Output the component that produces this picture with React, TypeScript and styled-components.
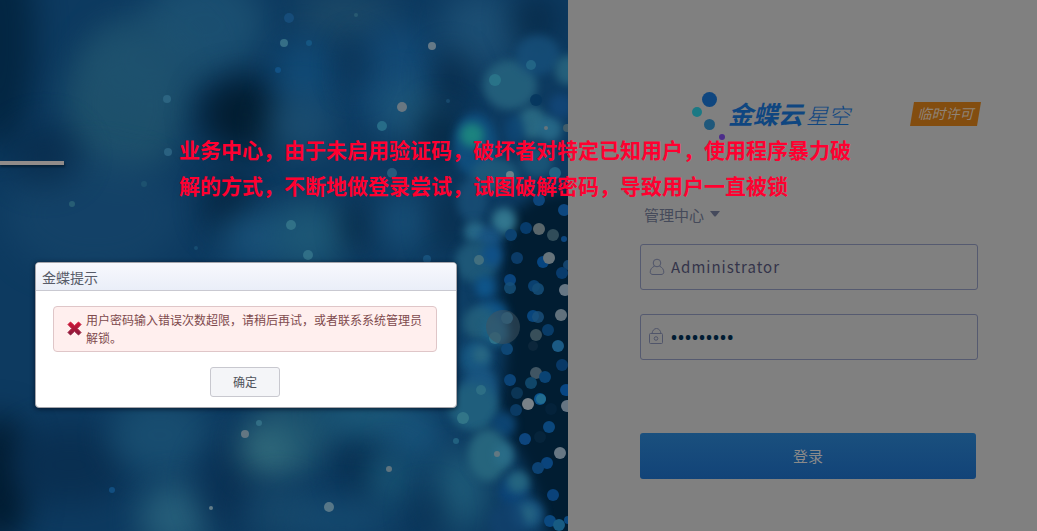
import React from "react";
import styled, { createGlobalStyle } from "styled-components";

const GlobalStyle = createGlobalStyle`
  *, *::before, *::after { box-sizing: border-box; }
  body {
    margin: 0;
    background: #808080;
    font-family: "Noto Sans", "Noto Sans CJK SC", sans-serif;
  }
  button, input, select { font-family: inherit; }
`;

const Page = styled.main`
  position: relative;
  display: grid;
  grid-template-columns: minmax(0, 568fr) minmax(0, 469fr);
  min-height: 100vh;
  overflow: hidden;
`;

const Scene = styled.svg`
  display: block;
  width: 100%;
  height: 100%;
  background: #0a3153;
`;

const LoginPanel = styled.section`
  padding: 92px 56px 52px 72px;
  background: #808080;
`;

const Brand = styled.header`
  display: flex;
  align-items: flex-start;
  padding-left: 52px;
  height: 48px;
`;

const BrandMark = styled.svg`
  flex: none;
  width: 36px;
  height: 48px;
`;

const BrandName = styled.h1`
  margin: 0;
  flex: none;
  display: flex;
  align-items: baseline;
  gap: 3px;
  color: #0f4680;
  font-size: 25px;
  line-height: 44px;
  font-style: italic;
  font-weight: 700;
`;

const BrandSuffix = styled.span`
  font-size: 22px;
  font-weight: 300;
`;

const LicenseBadge = styled.span`
  display: block;
  margin: 10px 0 0 auto;
  flex: none;
  width: 71px;
  height: 24px;
  clip-path: polygon(4px 0, 100% 0, calc(100% - 4px) 100%, 0 100%);
  background: #834d0f;
  color: #8f8377;
  font-size: 14px;
  line-height: 23px;
  font-style: italic;
  text-align: center;
`;

const Form = styled.form`
  display: flex;
  flex-direction: column;
  width: 338px;
  max-width: 100%;
`;

const CenterPicker = styled.div`
  display: flex;
  align-items: center;
  height: 24px;
  margin: 63px 0 17px 4px;
`;

const CenterSelect = styled.select`
  appearance: none;
  border: 0;
  padding: 0;
  width: 66px;
  background: transparent;
  color: #454a5a;
  font-size: 15px;
  line-height: 24px;
`;

const Caret = styled.svg`
  width: 10px;
  height: 6px;
  margin-top: -2px;
  fill: #454a5c;
`;

const Field = styled.label`
  display: flex;
  align-items: center;
  gap: 6px;
  height: 46px;
  margin-bottom: 24px;
  padding: 0 8px;
  border: 1px solid #555a70;
  border-radius: 3px;
`;

const FieldIcon = styled.svg`
  flex: none;
  width: 16px;
  height: 18px;
  fill: none;
  stroke: #50556a;
`;

const FieldInput = styled.input`
  flex: 1;
  min-width: 0;
  border: 0;
  padding: 0;
  outline: 0;
  background: transparent;
  color: #34344a;
  font-family: "Noto Sans CJK SC", sans-serif;
  font-size: 15px;
  line-height: 24px;
  letter-spacing: 1px;

  &[type="password"] {
    color: #001c33;
    font-family: "Noto Sans", sans-serif;
    font-size: 16px;
    font-weight: 700;
  }
`;

const LoginButton = styled.button`
  height: 46px;
  margin: 49px 2px 0 0;
  border: 0;
  border-radius: 3px;
  padding: 0 0 2px;
  background: linear-gradient(#1a507e, #124378);
  color: #8a8a8a;
  font-size: 15px;
`;

const Notice = styled.p`
  position: absolute;
  top: 132px;
  left: 179px;
  margin: 0;
  color: #ff0030;
  font-size: 21px;
  line-height: 36px;
  font-weight: 700;
  white-space: nowrap;
`;

const Dialog = styled.section`
  position: absolute;
  top: 262px;
  left: 35px;
  width: 422px;
  border: 1px solid #a5a5ab;
  border-radius: 4px;
  background: #fff;
  box-shadow: 0 1px 5px rgba(0, 10, 25, 0.7);
`;

const DialogTitle = styled.h2`
  margin: 0;
  padding: 2px 6px 0;
  height: 28px;
  border-bottom: 1px solid #c9c9d1;
  border-radius: 3px 3px 0 0;
  background: linear-gradient(#f7f8fd, #eaeef8);
  color: #575b68;
  font-size: 14px;
  line-height: 26px;
  font-weight: 400;
`;

const DialogBody = styled.div`
  padding: 15px 19px 10px 17px;
  display: flex;
  flex-direction: column;
  align-items: center;
  gap: 15px;
`;

const Alert = styled.div`
  display: flex;
  align-items: center;
  width: 100%;
  gap: 4px;
  padding: 5px 12px 3px 13px;
  border: 1px solid #dfc6c8;
  border-radius: 4px;
  background: #ffefee;
  color: #804a4d;
  font-size: 12px;
  line-height: 18px;
`;

const AlertIcon = styled.svg`
  flex: none;
  width: 15px;
  height: 15px;
  margin-bottom: 4px;
`;

const AlertText = styled.p`
  margin: 0;
  flex: 1;
`;

const ConfirmButton = styled.button`
  width: 70px;
  height: 30px;
  border: 1px solid #c8c8cf;
  border-radius: 3px;
  background: #f4f5f8;
  color: #50535c;
  font-size: 12px;
`;

type Glow = [x: number, y: number, rx: number, ry: number, color: string, opacity: number];
type Dot = [x: number, y: number, r: number, color: string, opacity: number];

const hazes: Glow[] = [
  [0, 40, 35, 110, "#02243f", 0.9],
  [205, 25, 60, 50, "#1e5475", 0.8],
  [125, 105, 60, 75, "#22566e", 0.8],
  [150, 60, 60, 50, "#1e5270", 0.6],
  [95, 215, 90, 60, "#16456a", 0.7],
  [45, 155, 35, 30, "#082a49", 0.7],
  [245, 115, 45, 38, "#021d31", 1],
  [230, 205, 25, 32, "#04233d", 0.9],
  [345, 15, 50, 25, "#1f4c69", 0.8],
  [305, 75, 30, 38, "#124c78", 0.9],
  [300, 125, 35, 30, "#1e5275", 0.8],
  [395, 75, 45, 50, "#144b77", 0.9],
  [410, 110, 32, 28, "#205a7b", 0.8],
  [480, 30, 40, 40, "#1d5075", 0.9],
  [355, 65, 12, 25, "#072a49", 0.8],
  [450, 80, 15, 28, "#06233e", 0.8],
  [440, 135, 18, 30, "#04233b", 0.9],
  [535, 20, 22, 22, "#052541", 0.8],
  [258, 238, 38, 28, "#1a537b", 0.9],
  [310, 235, 38, 35, "#1e5a78", 0.9],
  [358, 226, 12, 20, "#041f36", 0.9],
  [405, 222, 28, 30, "#185078", 0.9],
  [450, 220, 16, 40, "#062844", 0.7],
  [0, 480, 30, 65, "#011b30", 1],
  [70, 465, 60, 40, "#092e50", 0.9],
  [160, 435, 50, 40, "#1b5274", 0.8],
  [175, 517, 36, 34, "#27607b", 0.95],
  [230, 485, 30, 45, "#0a3053", 0.9],
  [272, 448, 32, 28, "#37717f", 0.95],
  [300, 430, 40, 35, "#245e75", 0.6],
  [280, 512, 35, 28, "#184a6c", 0.8],
  [360, 465, 18, 35, "#062b4b", 0.9],
  [370, 415, 52, 20, "#1f607f", 0.9],
  [417, 435, 25, 24, "#1a5880", 0.9],
  [390, 478, 22, 28, "#1b5877", 0.9],
  [340, 520, 50, 20, "#195176", 0.7],
  [460, 490, 25, 40, "#21607d", 0.9],
  [430, 512, 15, 20, "#062a4b", 0.7],
  [450, 330, 18, 70, "#0f456d", 0.7],
];

const glows: Glow[] = [
  [510, 85, 27, 25, "#24607c", 0.95],
  [538, 55, 22, 20, "#17507b", 0.8],
  [568, 70, 13, 15, "#27647e", 0.9],
  [475, 145, 22, 32, "#105080", 0.9],
  [472, 135, 12, 12, "#1c837f", 1],
  [532, 123, 15, 16, "#2a6a83", 0.95],
  [550, 129, 12, 13, "#286b8a", 0.9],
  [561, 106, 12, 12, "#124678", 0.9],
  [495, 175, 24, 17, "#1e5a7a", 0.9],
  [537, 162, 16, 15, "#1b5779", 0.9],
  [515, 130, 10, 15, "#0e4776", 0.8],
  [472, 200, 15, 22, "#195078", 0.8],
  [504, 221, 12, 13, "#32768e", 1],
  [475, 232, 11, 11, "#276887", 1],
  [489, 238, 12, 10, "#1b5787", 0.9],
  [476, 262, 21, 21, "#1d5777", 1],
  [492, 255, 10, 11, "#105087", 1],
  [485, 287, 10, 11, "#0f558a", 1],
  [492, 315, 16, 14, "#10568b", 0.9],
  [480, 323, 17, 17, "#235f7b", 0.9],
  [496, 333, 13, 13, "#1c6489", 0.9],
  [476, 358, 15, 17, "#175781", 1],
  [481, 355, 8, 9, "#2a6882", 1],
  [480, 388, 17, 22, "#195580", 1],
  [473, 407, 25, 24, "#1f5e7c", 1],
  [504, 424, 12, 12, "#0e4776", 0.9],
  [488, 455, 20, 26, "#26657d", 1],
  [504, 455, 10, 12, "#2b6e89", 0.9],
  [513, 492, 14, 15, "#0d4477", 1],
  [518, 482, 11, 11, "#266781", 0.95],
  [527, 514, 17, 15, "#164f7b", 1],
  [528, 514, 8, 9, "#286884", 0.9],
  [507, 523, 18, 20, "#12426f", 0.7],
];

const dots: Dot[] = [
  [289, 18, 5, "#185080", 0.8],
  [284, 43, 4, "#356e86", 1],
  [309, 43, 3, "#155682", 1],
  [356, 15, 2, "#33677a", 0.6],
  [278, 70, 3, "#125184", 1],
  [432, 46, 4, "#657987", 1],
  [167, 99, 4, "#2c6481", 1],
  [168, 152, 4, "#2a6180", 1],
  [72, 204, 3, "#2a6175", 0.9],
  [144, 184, 3, "#235b75", 0.6],
  [196, 248, 2, "#1b5579", 0.7],
  [402, 107, 5, "#697781", 1],
  [382, 126, 5, "#276c88", 1],
  [448, 101, 2, "#1a4e72", 0.8],
  [392, 173, 5, "#326a88", 0.7],
  [495, 80, 6, "#2c788c", 0.8],
  [531, 65, 5, "#256a8a", 0.8],
  [536, 100, 6, "#06365e", 0.9],
  [510, 175, 4, "#6c8189", 1],
  [555, 173, 6, "#266b8b", 0.8],
  [546, 128, 2, "#66747c", 1],
  [567, 128, 4, "#415c68", 1],
  [291, 225, 5, "#347489", 0.9],
  [308, 255, 5, "#33728a", 0.9],
  [427, 259, 4, "#185480", 0.9],
  [479, 260, 5, "#47727f", 0.9],
  [539, 200, 6, "#0d457b", 1],
  [564, 210, 6, "#0d477f", 1],
  [526, 228, 6, "#073b6b", 1],
  [511, 235, 6, "#0c4270", 1],
  [539, 229, 6, "#59666b", 1],
  [553, 235, 6, "#304c59", 1],
  [564, 239, 3, "#0b457d", 1],
  [517, 258, 6, "#0b3b67", 1],
  [543, 262, 6, "#064580", 1],
  [549, 258, 6, "#67747b", 1],
  [568, 265, 5, "#14436c", 1],
  [510, 280, 6, "#0a447c", 1],
  [510, 288, 6, "#17517b", 0.8],
  [534, 286, 6, "#0a406f", 1],
  [538, 289, 6, "#144c76", 0.9],
  [562, 273, 6, "#083b6c", 1],
  [565, 290, 6, "#677784", 1],
  [507, 318, 6, "#246587", 1],
  [533, 316, 6, "#08457c", 1],
  [538, 317, 6, "#1b517c", 0.8],
  [561, 315, 6, "#61717c", 1],
  [548, 330, 6, "#083b67", 1],
  [536, 335, 6, "#384f5a", 1],
  [558, 346, 6, "#1b5a84", 1],
  [533, 346, 5, "#112b3e", 0.7],
  [495, 338, 6, "#2d7189", 1],
  [507, 349, 6, "#0e4674", 1],
  [562, 365, 6, "#083866", 1],
  [536, 373, 6, "#405563", 1],
  [545, 377, 6, "#0a4374", 1],
  [531, 383, 6, "#104669", 1],
  [510, 380, 6, "#0b4376", 1],
  [566, 390, 6, "#084683", 1],
  [517, 393, 6, "#0b3555", 1],
  [540, 399, 6, "#0b538d", 1],
  [541, 399, 5, "#277391", 0.8],
  [528, 404, 6, "#788188", 1],
  [516, 410, 6, "#0a3a63", 1],
  [551, 409, 6, "#04223a", 1],
  [567, 406, 6, "#667583", 1],
  [549, 427, 6, "#0b477c", 1],
  [525, 439, 6, "#0d457d", 1],
  [540, 437, 6, "#06243b", 1],
  [560, 453, 6, "#677784", 1],
  [547, 463, 6, "#0a447c", 1],
  [538, 468, 6, "#0c4273", 1],
  [553, 495, 6, "#0a427a", 1],
  [550, 521, 6, "#0b4980", 1],
  [559, 525, 6, "#175b82", 1],
  [568, 520, 4, "#0a487f", 1],
  [481, 390, 5, "#37798b", 0.6],
  [463, 418, 6, "#347889", 0.9],
  [456, 441, 3, "#266886", 0.8],
  [497, 454, 3, "#627882", 1],
  [389, 469, 3, "#5f747f", 1],
  [329, 507, 5, "#577788", 1],
  [259, 423, 3, "#326e85", 1],
  [245, 434, 4, "#637682", 1],
  [211, 508, 2, "#637c88", 1],
  [112, 490, 3, "#135184", 0.9],
];

const Blur = ({ id, amount }: { id: string; amount: number }) => (
  <filter id={id} x="-150%" y="-150%" width="400%" height="400%" colorInterpolationFilters="sRGB">
    <feGaussianBlur stdDeviation={amount} />
  </filter>
);

const Backdrop = () => (
  <Scene viewBox="0 0 568 531" preserveAspectRatio="xMidYMid slice" aria-hidden="true">
    <defs>
      <Blur id="haze" amount={16} />
      <Blur id="night" amount={7} />
      <Blur id="glow" amount={4} />
      <Blur id="soft" amount={1} />
    </defs>
    <rect width="568" height="531" fill="#0d3a60" />
    {hazes.map(([cx, cy, rx, ry, fill, opacity], i) => (
      <ellipse key={i} cx={cx} cy={cy} rx={rx} ry={ry} fill={fill} opacity={opacity} filter="url(#haze)" />
    ))}
    <path
      d="M590 185 L535 196 L514 212 L502 245 L500 300 L506 350 L500 405 L511 440 L530 478 L550 540 L590 540 Z"
      fill="#011d32"
      filter="url(#night)"
    />
    {glows.map(([cx, cy, rx, ry, fill, opacity], i) => (
      <ellipse key={i} cx={cx} cy={cy} rx={rx} ry={ry} fill={fill} opacity={opacity} filter="url(#glow)" />
    ))}
    {dots.map(([cx, cy, r, fill, opacity], i) => (
      <circle key={i} cx={cx} cy={cy} r={r} fill={fill} opacity={opacity} />
    ))}
    <circle cx="503" cy="327" r="17" fill="#405361" opacity="0.55" />
    <rect x="0" y="163" width="65" height="4" fill="#021a2d" opacity="0.7" filter="url(#soft)" />
    <rect x="0" y="161" width="64" height="4" fill="#918c8a" />
  </Scene>
);

const App = () => (
  <>
    <GlobalStyle />
    <Page>
      <Backdrop />

      <LoginPanel>
        <Brand>
          <BrandMark viewBox="0 0 36 48" aria-hidden="true">
            <circle cx="17.5" cy="7.5" r="7.5" fill="#0f467f" />
            <circle cx="5" cy="20" r="5" fill="#1b7984" />
            <circle cx="17.5" cy="32.5" r="5.5" fill="#1f587b" />
            <circle cx="30" cy="45" r="3" fill="#4c2d8a" />
          </BrandMark>
          <BrandName>
            金蝶云<BrandSuffix>星空</BrandSuffix>
          </BrandName>
          <LicenseBadge>临时许可</LicenseBadge>
        </Brand>

        <Form onSubmit={(event) => event.preventDefault()}>
          <CenterPicker>
            <CenterSelect aria-label="数据中心" defaultValue="admin">
              <option value="admin">管理中心</option>
            </CenterSelect>
            <Caret viewBox="0 0 10 6" aria-hidden="true">
              <path d="M0 0H10L6 5Q5 6 4 5Z" />
            </Caret>
          </CenterPicker>

          <Field>
            <FieldIcon viewBox="0 0 16 18" aria-hidden="true">
              <circle cx="8" cy="5" r="3.8" />
              <path d="M5.4 8.2C2.8 9.3 1.2 11.5 1.2 14.2C1.2 15.8 2.6 16.5 4 16.5H12C13.4 16.5 14.8 15.8 14.8 14.2C14.8 11.5 13.2 9.3 10.6 8.2" />
            </FieldIcon>
            <FieldInput type="text" aria-label="用户名" defaultValue="Administrator" />
          </Field>

          <Field>
            <FieldIcon viewBox="0 0 16 18" aria-hidden="true">
              <path d="M3 5.5C3.400 2.500 5.200 0.500 7.500 0.500S11.600 2.500 12 5.500" />
              <rect x="0.500" y="5.500" width="13" height="10" rx="1" />
              <circle cx="7" cy="10.500" r="1.800" />
            </FieldIcon>
            <FieldInput type="password" aria-label="密码" defaultValue="123456789" />
          </Field>

          <LoginButton type="submit">登录</LoginButton>
        </Form>
      </LoginPanel>

      <Notice>
        业务中心，由于未启用验证码，破坏者对特定已知用户，使用程序暴力破
        <br />
        解的方式，不断地做登录尝试，试图破解密码，导致用户一直被锁
      </Notice>

      <Dialog role="alertdialog" aria-labelledby="dialog-title" aria-describedby="dialog-text">
        <DialogTitle id="dialog-title">金蝶提示</DialogTitle>
        <DialogBody>
          <Alert>
            <AlertIcon viewBox="0 0 15 15" aria-hidden="true">
              <defs>
                <linearGradient id="cross" x1="0" y1="0" x2="0" y2="1">
                  <stop offset="0" stopColor="#d41436" />
                  <stop offset="1" stopColor="#851a3c" />
                </linearGradient>
              </defs>
              <path
                d="M3.500 1L7.500 4.800L11.500 1L14 3.500L10.200 7.500L14 11.500L11.500 14L7.500 10.200L3.500 14L1 11.500L4.800 7.500L1 3.500Z"
                fill="url(#cross)"
                stroke="url(#cross)"
                strokeLinejoin="round"
              />
            </AlertIcon>
            <AlertText id="dialog-text">
              用户密码输入错误次数超限，请稍后再试，或者联系系统管理员解锁。
            </AlertText>
          </Alert>
          <ConfirmButton type="button">确定</ConfirmButton>
        </DialogBody>
      </Dialog>
    </Page>
  </>
);

export default App;
